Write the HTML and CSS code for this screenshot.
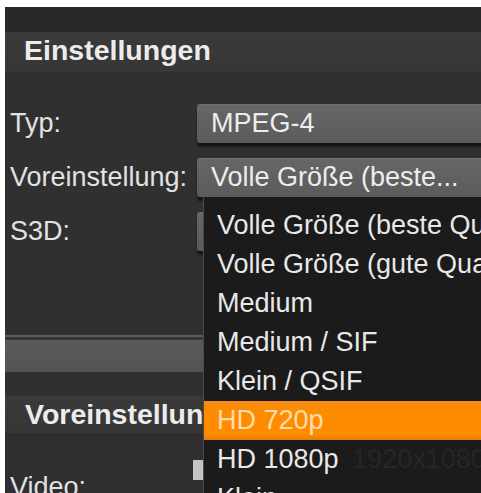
FILE: index.html
```html
<!DOCTYPE html>
<html lang="de">
<head>
<meta charset="utf-8">
<title>Einstellungen</title>
<link rel="stylesheet" href="styles.css">
</head>
<body>
<div class="window">
  <div class="topstrip"></div>
  <div class="section-header">Einstellungen</div>
  <div class="settings">
    <div class="row"><span class="label">Typ:</span><div class="field">MPEG-4</div></div>
    <div class="row"><span class="label">Voreinstellung:</span><div class="field">Volle Größe (beste...</div></div>
    <div class="row"><span class="label">S3D:</span><div class="field"></div></div>
  </div>
  <div class="divider"></div>
  <div class="collapsed-bar"></div>
  <div class="spacer"></div>
  <div class="section-header second">Voreinstellungen</div>
  <div class="preset-body">
    <div class="video-row"><span class="label video-label">Video:</span><div class="video-value"></div></div>
  </div>
  <ul class="dropdown">
    <li class="item">Volle Größe (beste Qualität)</li>
    <li class="item">Volle Größe (gute Qualität)</li>
    <li class="item">Medium</li>
    <li class="item">Medium / SIF</li>
    <li class="item">Klein / QSIF</li>
    <li class="item selected">HD 720p</li>
    <li class="item">HD 1080p <span class="ghost">1920x1080, 10</span></li>
    <li class="item">Klein</li>
  </ul>
</div>
</body>
</html>
```

FILE: styles.css
```css
html, body {
  margin: 0;
  padding: 0;
  background: #ffffff;
}

body {
  font-family: "Liberation Sans", Arial, sans-serif;
  overflow: hidden;
}

.window {
  position: relative;
  margin: 7px 0 0 5px;
  height: 486px;
  background: #303030;
  overflow: hidden;
}

.topstrip {
  height: 25px;
  background: #292929;
}

.section-header {
  height: 40px;
  box-sizing: border-box;
  padding: 0 0 3px 19px;
  line-height: 37px;
  background: linear-gradient(#3a3a3a, #363636);
  color: #ececec;
  font-weight: bold;
  font-size: 28.5px;
  white-space: nowrap;
}

.section-header.second {
  height: 37px;
  line-height: 36px;
  padding: 0 0 1px 20px;
}

.settings {
  padding: 32px 0 84px 0;
  display: flex;
  flex-direction: column;
  gap: 15px;
  background: #303030;
}

.row {
  display: flex;
  height: 39px;
  align-items: stretch;
}

.label {
  width: 192px;
  flex: none;
  box-sizing: border-box;
  padding-left: 5px;
  line-height: 39px;
  font-size: 27px;
  color: #e2e2e2;
  white-space: nowrap;
}

.field {
  flex: 1;
  margin-right: -10px;
  border-radius: 3px;
  background: linear-gradient(#666666, #5b5b5b);
  border-top: 1px solid #707070;
  box-sizing: border-box;
  box-shadow: 0 4px 2px rgba(0, 0, 0, 0.55);
  padding-left: 14px;
  line-height: 37px;
  font-size: 27px;
  color: #ededed;
  white-space: nowrap;
}

.divider {
  height: 2px;
  background: #5c5c5c;
}

.collapsed-bar {
  height: 32px;
  border-top: 3px solid #363636;
  background: linear-gradient(#5a5a5a, #535353);
}

.spacer {
  height: 24px;
  background: #303030;
}

.preset-body {
  background: #2f2f2f;
  padding-top: 27px;
}

.video-row {
  display: flex;
  height: 39px;
}

.video-label {
  line-height: 31px;
  margin-top: 12px;
}

.video-value {
  width: 40px;
  height: 20px;
  margin-left: -4px;
  background: #c4c4c4;
}

.dropdown {
  position: absolute;
  left: 198px;
  top: 190px;
  right: -30px;
  bottom: -40px;
  margin: 0;
  padding: 9px 0 0 0;
  list-style: none;
  background: #1b1b1b;
  border-left: 1px solid #4a4a4a;
}

.item {
  height: 39px;
  line-height: 39px;
  padding-left: 13px;
  font-size: 27px;
  color: #e8e8e8;
  white-space: nowrap;
}

.item.selected {
  background: linear-gradient(#f48a1c, #ff8c00 20%, #ff8c00 85%, #e67c08);
  color: #ffdcae;
}

.ghost {
  margin-left: 6px;
  color: #262626;
}
```
